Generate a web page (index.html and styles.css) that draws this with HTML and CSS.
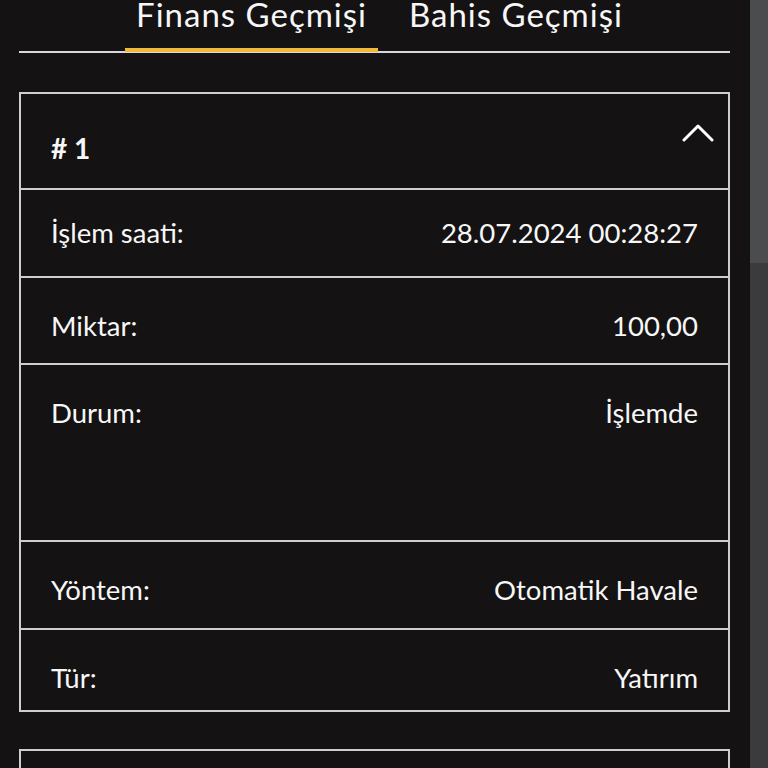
FILE: index.html
```
<!DOCTYPE html>
<html lang="tr">
<head>
<meta charset="utf-8">
<title>Finans Geçmişi</title>
<link rel="stylesheet" href="styles.css">
</head>
<body>
<div class="page">
  <main class="main">
    <nav class="tabs">
      <div class="tab active">Finans Geçmişi</div>
      <div class="tab">Bahis Geçmişi</div>
    </nav>
    <section class="card">
      <div class="card-head">
        <div class="card-title"># 1</div>
        <svg class="chev" width="32" height="18" viewBox="0 0 32 18"><path d="M2 16 L16 2 L30 16" fill="none" stroke="#fff" stroke-width="3" stroke-linecap="round" stroke-linejoin="round"/></svg>
      </div>
      <div class="row first"><span class="label">İşlem saati:</span><span class="value">28.07.2024 00:28:27</span></div>
      <div class="row short"><span class="label">Miktar:</span><span class="value">100,00</span></div>
      <div class="row tall"><span class="label">Durum:</span><span class="value">İşlemde</span></div>
      <div class="row"><span class="label">Yöntem:</span><span class="value">Otomatik Havale</span></div>
      <div class="row last"><span class="label">Tür:</span><span class="value">Yatırım</span></div>
    </section>
    <section class="card">
      <div class="card-head">
        <div class="card-title"># 2</div>
      </div>
    </section>
  </main>
  <div class="scrollbar"><div class="thumb"></div></div>
</div>
</body>
</html>
```
FILE: styles.css
```
html, body {
  margin: 0;
  height: 100%;
  overflow: hidden;
  background: #141212;
  color: #f7f7f7;
  font-family: Lato, "Open Sans", sans-serif;
}
.page {
  display: flex;
  height: 768px;
}
.main {
  width: 711px;
  padding: 0 19px;
  flex: none;
}
.tabs {
  display: flex;
  justify-content: center;
  gap: 20px;
  margin-top: -6px;
  border-bottom: 2px solid #d8d8d8;
  padding-left: 10px;
}
.tab {
  font-size: 33px;
  letter-spacing: 1px;
  line-height: 40px;
  padding: 0 11px 14px;
  border-bottom: 4px solid transparent;
  margin-bottom: -1px;
  white-space: nowrap;
}
.tab.active {
  border-bottom-color: #f2b83a;
}
.card {
  margin-top: 39px;
  border: 2px solid #cfcfcf;
}
.card + .card {
  margin-top: 37px;
}
.card-head {
  display: flex;
  justify-content: space-between;
  align-items: flex-start;
  height: 94px;
  box-sizing: border-box;
  padding: 0 14px 0 30px;
}
.card-title {
  font-size: 28px;
  font-weight: 700;
  line-height: 32px;
  padding-top: 38px;
}
.chev {
  margin-top: 30px;
}
.row {
  display: flex;
  justify-content: space-between;
  align-items: flex-start;
  box-sizing: border-box;
  height: 88px;
  border-top: 2px solid #cfcfcf;
  padding: 32px 30px 0;
  font-size: 27.5px;
  line-height: 32px;
}
.row.first {
  padding-top: 27px;
}
.row.short {
  height: 87px;
}
.row.tall {
  height: 177px;
}
.row.last {
  height: 82px;
}
.scrollbar {
  flex: 1;
  background: #3b3b3d;
  border-left: 1px solid #111;
}
.thumb {
  height: 263px;
  background: #4b4c4e;
}
```
